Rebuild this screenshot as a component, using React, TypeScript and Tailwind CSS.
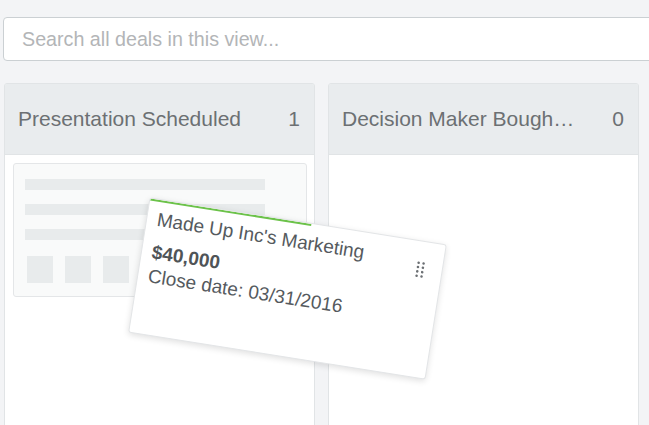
function DragDots() {
  return (
    <svg width="10" height="18" viewBox="0 0 10 18" className="text-[#6b6f73]">
      {[0, 1, 2, 3].map((r) =>
        [0, 1].map((c) => (
          <circle key={`${r}-${c}`} cx={2 + c * 5} cy={2.5 + r * 4.4} r="1.3" fill="currentColor" />
        ))
      )}
    </svg>
  );
}

function Column({ title, count, children }: { title: string; count: number; children?: React.ReactNode }) {
  return (
    <div className="w-[311px] h-[360px] flex flex-col border border-[#e1e4e6] rounded-t-[3px] overflow-hidden">
      <div className="h-[71px] bg-[#e9ecee] border-b border-[#e1e4e6] flex items-center justify-between pl-[13px] pr-[14px] text-[21px] text-[#6c7073]">
        <span className="truncate w-[233px]">{title}</span>
        <span>{count}</span>
      </div>
      <div className="flex-1 bg-white p-[8px]">{children}</div>
    </div>
  );
}

function PlaceholderCard() {
  return (
    <div className="w-[294px] h-[134px] border border-[#e4e6e8] rounded-[3px] bg-[#f9fafa] pt-[15px] pl-[11px]">
      <div className="flex flex-col gap-[14px]">
        <div className="w-[240px] h-[11px] bg-[#e8ebec]" />
        <div className="w-[240px] h-[11px] bg-[#e8ebec]" />
        <div className="w-[240px] h-[11px] bg-[#e8ebec]" />
      </div>
      <div className="flex gap-[12px] mt-[16px] pl-[2px]">
        <div className="w-[26px] h-[27px] bg-[#e8ebec]" />
        <div className="w-[26px] h-[27px] bg-[#e8ebec]" />
        <div className="w-[26px] h-[27px] bg-[#e8ebec]" />
      </div>
    </div>
  );
}

export default function App() {
  return (
    <div className="relative w-[649px] h-[425px] overflow-hidden bg-[#f3f4f6] font-['Liberation_Sans',Arial,sans-serif]">
      <div className="pt-[17px] pl-[3px]">
        <input
          type="text"
          placeholder="Search all deals in this view..."
          className="w-[680px] h-[44px] bg-white border border-[#cbd0d3] rounded-[4px] px-[18px] text-[19.7px] text-[#555] placeholder:text-[#b3b5b7] outline-none"
        />
      </div>
      <div className="flex gap-[13px] pl-[4px] mt-[22px]">
        <Column title="Presentation Scheduled" count={1}>
          <PlaceholderCard />
        </Column>
        <Column title="Decision Maker Bought-In" count={0} />
      </div>

      {/* card being dragged */}
      <div className="absolute left-[137px] top-[220px] w-[301px] h-[137px] rotate-[9deg] bg-white rounded-[3px] border border-[#e3e5e7] shadow-[0_2px_6px_rgba(0,0,0,0.12)] overflow-hidden">
        <div className="absolute left-0 top-0 h-[2px] w-[163px] bg-[#6cc24a]" />
        <div className="absolute right-[16px] top-[19px]">
          <DragDots />
        </div>
        <div className="pt-[8px] pl-[10px] text-[#555a5e] text-[19px] leading-[24px]">
          <div className="mb-[9px]">Made Up Inc's Marketing</div>
          <div className="font-bold text-[#4f5457]">$40,000</div>
          <div>Close date: 03/31/2016</div>
        </div>
      </div>
    </div>
  );
}
